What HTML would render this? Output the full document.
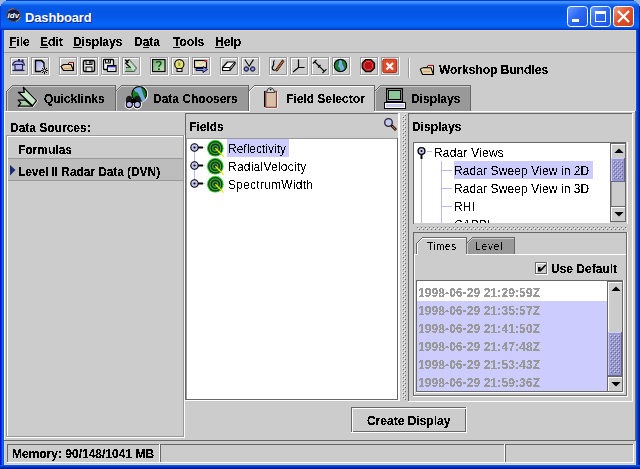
<!DOCTYPE html>
<html><head><meta charset="utf-8">
<style>
html,body{margin:0;padding:0;width:640px;height:469px;overflow:hidden;background:#0a2fd6;}
.t{position:absolute;white-space:nowrap;font-family:"Liberation Sans",sans-serif;font-size:12px;line-height:14px;color:#000;}
svg{position:absolute;left:0;top:0;}
u{text-decoration:underline;text-underline-offset:1px;}
</style></head><body>
<svg width="640" height="469" viewBox="0 0 640 469" shape-rendering="auto">
<rect x="0" y="0" width="640" height="469" fill="#0a2fd6" />
<rect x="0" y="0" width="1" height="469" fill="#0010d0" />
<rect x="1" y="0" width="1" height="469" fill="#0038e0" />
<rect x="2" y="0" width="1" height="469" fill="#1068f4" />
<rect x="3" y="0" width="1" height="469" fill="#0a58e8" />
<rect x="639" y="0" width="1" height="469" fill="#001890" />
<rect x="638" y="0" width="1" height="469" fill="#0028b8" />
<rect x="637" y="0" width="1" height="469" fill="#0040d8" />
<rect x="636" y="0" width="1" height="469" fill="#0a54f0" />
<rect x="0" y="468" width="640" height="1" fill="#001890" />
<rect x="0" y="467" width="640" height="1" fill="#0028b8" />
<rect x="0" y="466" width="640" height="1" fill="#0040d8" />
<rect x="0" y="465" width="640" height="1" fill="#0a54f0" />
<rect x="4" y="30" width="632" height="435" fill="#cccccc" />
<rect x="4" y="30" width="1" height="435" fill="#dcd6c8" />
<rect x="4" y="30" width="632" height="1" fill="#dcd6c8" />
<rect x="635" y="30" width="1" height="435" fill="#d8d4c8" />
<rect x="4" y="464" width="632" height="1" fill="#dcd6c8" />
<rect x="4" y="0" width="632" height="1" fill="#0a3bd2" />
<rect x="4" y="1" width="632" height="1" fill="#3e96ff" />
<rect x="4" y="2" width="632" height="1" fill="#3a90ff" />
<rect x="4" y="3" width="632" height="1" fill="#2f80fb" />
<rect x="4" y="4" width="632" height="1" fill="#1b6cf2" />
<rect x="4" y="5" width="632" height="1" fill="#0c5fea" />
<rect x="4" y="6" width="632" height="1" fill="#085ae8" />
<rect x="4" y="7" width="632" height="1" fill="#0658e7" />
<rect x="4" y="8" width="632" height="1" fill="#0557e6" />
<rect x="4" y="9" width="632" height="1" fill="#0556e5" />
<rect x="4" y="10" width="632" height="1" fill="#0555e5" />
<rect x="4" y="11" width="632" height="1" fill="#0555e4" />
<rect x="4" y="12" width="632" height="1" fill="#0555e4" />
<rect x="4" y="13" width="632" height="1" fill="#0555e4" />
<rect x="4" y="14" width="632" height="1" fill="#0556e5" />
<rect x="4" y="15" width="632" height="1" fill="#0557e6" />
<rect x="4" y="16" width="632" height="1" fill="#0558e8" />
<rect x="4" y="17" width="632" height="1" fill="#0559ea" />
<rect x="4" y="18" width="632" height="1" fill="#055bed" />
<rect x="4" y="19" width="632" height="1" fill="#055df0" />
<rect x="4" y="20" width="632" height="1" fill="#055ff3" />
<rect x="4" y="21" width="632" height="1" fill="#0561f5" />
<rect x="4" y="22" width="632" height="1" fill="#0562f7" />
<rect x="4" y="23" width="632" height="1" fill="#0563f8" />
<rect x="4" y="24" width="632" height="1" fill="#0563f8" />
<rect x="4" y="25" width="632" height="1" fill="#0562f6" />
<rect x="4" y="26" width="632" height="1" fill="#055ef0" />
<rect x="4" y="27" width="632" height="1" fill="#0558e6" />
<rect x="4" y="28" width="632" height="1" fill="#0048d6" />
<rect x="4" y="29" width="632" height="1" fill="#0036bd" />
<rect x="0" y="0" width="4" height="1" fill="#0a3bd2" />
<rect x="636" y="0" width="4" height="1" fill="#0a3bd2" />
<rect x="0" y="1" width="4" height="1" fill="#3e96ff" />
<rect x="636" y="1" width="4" height="1" fill="#3e96ff" />
<rect x="0" y="2" width="4" height="1" fill="#3a90ff" />
<rect x="636" y="2" width="4" height="1" fill="#3a90ff" />
<rect x="0" y="3" width="4" height="1" fill="#2f80fb" />
<rect x="636" y="3" width="4" height="1" fill="#2f80fb" />
<rect x="0" y="4" width="4" height="1" fill="#1b6cf2" />
<rect x="636" y="4" width="4" height="1" fill="#1b6cf2" />
<rect x="0" y="5" width="4" height="1" fill="#0c5fea" />
<rect x="636" y="5" width="4" height="1" fill="#0c5fea" />
<rect x="0" y="6" width="4" height="1" fill="#085ae8" />
<rect x="636" y="6" width="4" height="1" fill="#085ae8" />
<rect x="0" y="7" width="4" height="1" fill="#0658e7" />
<rect x="636" y="7" width="4" height="1" fill="#0658e7" />
<rect x="0" y="8" width="4" height="1" fill="#0557e6" />
<rect x="636" y="8" width="4" height="1" fill="#0557e6" />
<rect x="0" y="9" width="4" height="1" fill="#0556e5" />
<rect x="636" y="9" width="4" height="1" fill="#0556e5" />
<rect x="0" y="10" width="4" height="1" fill="#0555e5" />
<rect x="636" y="10" width="4" height="1" fill="#0555e5" />
<rect x="0" y="11" width="4" height="1" fill="#0555e4" />
<rect x="636" y="11" width="4" height="1" fill="#0555e4" />
<rect x="0" y="12" width="4" height="1" fill="#0555e4" />
<rect x="636" y="12" width="4" height="1" fill="#0555e4" />
<rect x="0" y="13" width="4" height="1" fill="#0555e4" />
<rect x="636" y="13" width="4" height="1" fill="#0555e4" />
<rect x="0" y="14" width="4" height="1" fill="#0556e5" />
<rect x="636" y="14" width="4" height="1" fill="#0556e5" />
<rect x="0" y="15" width="4" height="1" fill="#0557e6" />
<rect x="636" y="15" width="4" height="1" fill="#0557e6" />
<rect x="0" y="16" width="4" height="1" fill="#0558e8" />
<rect x="636" y="16" width="4" height="1" fill="#0558e8" />
<rect x="0" y="17" width="4" height="1" fill="#0559ea" />
<rect x="636" y="17" width="4" height="1" fill="#0559ea" />
<rect x="0" y="18" width="4" height="1" fill="#055bed" />
<rect x="636" y="18" width="4" height="1" fill="#055bed" />
<rect x="0" y="19" width="4" height="1" fill="#055df0" />
<rect x="636" y="19" width="4" height="1" fill="#055df0" />
<rect x="0" y="20" width="4" height="1" fill="#055ff3" />
<rect x="636" y="20" width="4" height="1" fill="#055ff3" />
<rect x="0" y="21" width="4" height="1" fill="#0561f5" />
<rect x="636" y="21" width="4" height="1" fill="#0561f5" />
<rect x="0" y="22" width="4" height="1" fill="#0562f7" />
<rect x="636" y="22" width="4" height="1" fill="#0562f7" />
<rect x="0" y="23" width="4" height="1" fill="#0563f8" />
<rect x="636" y="23" width="4" height="1" fill="#0563f8" />
<rect x="0" y="24" width="4" height="1" fill="#0563f8" />
<rect x="636" y="24" width="4" height="1" fill="#0563f8" />
<rect x="0" y="25" width="4" height="1" fill="#0562f6" />
<rect x="636" y="25" width="4" height="1" fill="#0562f6" />
<rect x="0" y="26" width="4" height="1" fill="#055ef0" />
<rect x="636" y="26" width="4" height="1" fill="#055ef0" />
<rect x="0" y="27" width="4" height="1" fill="#0558e6" />
<rect x="636" y="27" width="4" height="1" fill="#0558e6" />
<rect x="0" y="28" width="4" height="1" fill="#0048d6" />
<rect x="636" y="28" width="4" height="1" fill="#0048d6" />
<rect x="0" y="29" width="4" height="1" fill="#0036bd" />
<rect x="636" y="29" width="4" height="1" fill="#0036bd" />
<rect x="0" y="0" width="6" height="1" fill="#9fb3dc" />
<rect x="634" y="0" width="6" height="1" fill="#9fb3dc" />
<rect x="0" y="1" width="4" height="1" fill="#9fb3dc" />
<rect x="636" y="1" width="4" height="1" fill="#9fb3dc" />
<rect x="0" y="2" width="3" height="1" fill="#9fb3dc" />
<rect x="637" y="2" width="3" height="1" fill="#9fb3dc" />
<rect x="0" y="3" width="2" height="1" fill="#9fb3dc" />
<rect x="638" y="3" width="2" height="1" fill="#9fb3dc" />
<rect x="0" y="4" width="1" height="1" fill="#9fb3dc" />
<rect x="639" y="4" width="1" height="1" fill="#9fb3dc" />
<rect x="0" y="5" width="1" height="1" fill="#9fb3dc" />
<rect x="639" y="5" width="1" height="1" fill="#9fb3dc" />
<rect x="0" y="6" width="1" height="24" fill="#0a3bd2" />
<rect x="639" y="6" width="1" height="24" fill="#0024b0" />
<g><ellipse cx="13.5" cy="15.3" rx="7.4" ry="6.7" fill="#50504a"/><path d="M8 11 Q11 8.6 14 8.8" stroke="#c06040" stroke-width="1" fill="none"/><path d="M16 21.5 Q19 20.5 20.5 17" stroke="#b0a060" stroke-width="1" fill="none"/><ellipse cx="13.5" cy="15.3" rx="6.3" ry="5.7" fill="#101a48"/><text x="13.4" y="18.3" font-family="Liberation Sans" font-size="8" font-weight="bold" fill="#fff" text-anchor="middle" font-style="italic">idv</text></g>
<defs><linearGradient id="gmin" x1="0" y1="0" x2="1" y2="1"><stop offset="0" stop-color="#6ea0ff"/><stop offset="0.45" stop-color="#2d6af5"/><stop offset="1" stop-color="#1a4fe0"/></linearGradient></defs>
<rect x="567.5" y="6.5" width="20" height="20" rx="3" ry="3" fill="url(#gmin)" stroke="#fff" stroke-width="1"/>
<rect x="572" y="19" width="7" height="3" fill="#fff" />
<defs><linearGradient id="gmax" x1="0" y1="0" x2="1" y2="1"><stop offset="0" stop-color="#6ea0ff"/><stop offset="0.45" stop-color="#2d6af5"/><stop offset="1" stop-color="#1a4fe0"/></linearGradient></defs>
<rect x="590.5" y="6.5" width="20" height="20" rx="3" ry="3" fill="url(#gmax)" stroke="#fff" stroke-width="1"/>
<rect x="595" y="11" width="11" height="3" fill="#fff" />
<rect x="595" y="11" width="1" height="11" fill="#fff" />
<rect x="605" y="11" width="1" height="11" fill="#fff" />
<rect x="595" y="21" width="11" height="1" fill="#fff" />
<defs><linearGradient id="gclose" x1="0" y1="0" x2="1" y2="1"><stop offset="0" stop-color="#f2a68a"/><stop offset="0.45" stop-color="#e2532c"/><stop offset="1" stop-color="#c83c18"/></linearGradient></defs>
<rect x="613.5" y="6.5" width="20" height="20" rx="3" ry="3" fill="url(#gclose)" stroke="#fff" stroke-width="1"/>
<path d="M618.8 11.8 L628.2 21.2 M628.2 11.8 L618.8 21.2" stroke="#fff" stroke-width="2.3" stroke-linecap="square"/>
<rect x="4" y="52" width="632" height="1" fill="#999999" />
<defs><linearGradient id="lav" x1="0" y1="0" x2="1" y2="1"><stop offset="0" stop-color="#9c9cdc"/><stop offset="1" stop-color="#ececff"/></linearGradient><linearGradient id="grn" x1="0" y1="0" x2="1" y2="1"><stop offset="0" stop-color="#6aa66a"/><stop offset="1" stop-color="#c8e8c8"/></linearGradient><radialGradient id="glb" cx="0.4" cy="0.4" r="0.7"><stop offset="0" stop-color="#a0c8ff"/><stop offset="1" stop-color="#2060c0"/></radialGradient></defs>
<rect x="10" y="57" width="18" height="1" fill="#999999" />
<rect x="10" y="74" width="18" height="1" fill="#999999" />
<rect x="10" y="57" width="1" height="18" fill="#999999" />
<rect x="27" y="57" width="1" height="18" fill="#999999" />
<rect x="11" y="58" width="1" height="16" fill="#ffffff" />
<rect x="11" y="58" width="16" height="1" fill="#ffffff" />
<rect x="10" y="75" width="19" height="1" fill="#ffffff" />
<rect x="28" y="57" width="1" height="19" fill="#ffffff" />
<g transform="translate(11,58)"><path d="M1.5 7 C2 4.2 4.5 3 7.5 3 C10.5 3 13 4.2 13.5 7 Z" fill="#b0b0e4" stroke="#1c1c58" stroke-width="1.1"/><rect x="7" y="1" width="2" height="2.5" fill="#1c1c58"/><rect x="10.5" y="1.5" width="2" height="2.5" fill="#1c1c58"/><rect x="4" y="6.5" width="7.5" height="5.5" fill="#b8b8e8" stroke="#1c1c58" stroke-width="1.1"/><path d="M1.5 12.5 H13.5" stroke="#1c1c58" stroke-width="1.2"/></g>
<rect x="31" y="57" width="18" height="1" fill="#999999" />
<rect x="31" y="74" width="18" height="1" fill="#999999" />
<rect x="31" y="57" width="1" height="18" fill="#999999" />
<rect x="48" y="57" width="1" height="18" fill="#999999" />
<rect x="32" y="58" width="1" height="16" fill="#ffffff" />
<rect x="32" y="58" width="16" height="1" fill="#ffffff" />
<rect x="31" y="75" width="19" height="1" fill="#ffffff" />
<rect x="49" y="57" width="1" height="19" fill="#ffffff" />
<g transform="translate(32,58)"><path d="M3.5 2.5 H9.5 L12 5 V13.5 H3.5 Z" fill="url(#lav)" stroke="#000" stroke-width="1.3"/><path d="M9.5 2.5 L12 5" stroke="#000" stroke-width="1.3"/><circle cx="12.5" cy="12.5" r="3.6" fill="#cccccc"/><path d="M12.5 9 V16 M9 12.5 H16 M10 10 L15 15 M15 10 L10 15" stroke="#000" stroke-width="1"/><circle cx="12.5" cy="12.5" r="1.1" fill="#fff"/></g>
<rect x="59" y="57" width="18" height="1" fill="#999999" />
<rect x="59" y="74" width="18" height="1" fill="#999999" />
<rect x="59" y="57" width="1" height="18" fill="#999999" />
<rect x="76" y="57" width="1" height="18" fill="#999999" />
<rect x="60" y="58" width="1" height="16" fill="#ffffff" />
<rect x="60" y="58" width="16" height="1" fill="#ffffff" />
<rect x="59" y="75" width="19" height="1" fill="#ffffff" />
<rect x="77" y="57" width="1" height="19" fill="#ffffff" />
<g transform="translate(60,58)"><path d="M3.5 6.5 H8 L9 4.5 H13.5 V12.5 H3.5 Z" fill="#f2e2c4" stroke="#000" stroke-width="1"/><path d="M9 4.5 H13.5" stroke="#a01818" stroke-width="1.2"/><path d="M1 8.5 C2 7 3 6.5 5 6.5 H11 L13.5 12.5 H3.5 Z" fill="#ead2a8" stroke="#000" stroke-width="1.2"/><path d="M4 10.5 H11" stroke="#c8a880" stroke-width="1.5"/></g>
<rect x="80" y="57" width="18" height="1" fill="#999999" />
<rect x="80" y="74" width="18" height="1" fill="#999999" />
<rect x="80" y="57" width="1" height="18" fill="#999999" />
<rect x="97" y="57" width="1" height="18" fill="#999999" />
<rect x="81" y="58" width="1" height="16" fill="#ffffff" />
<rect x="81" y="58" width="16" height="1" fill="#ffffff" />
<rect x="80" y="75" width="19" height="1" fill="#ffffff" />
<rect x="98" y="57" width="1" height="19" fill="#ffffff" />
<g transform="translate(81,58)"><rect x="2.5" y="2.5" width="11" height="11" rx="1.5" fill="#f4f4f4" stroke="#000" stroke-width="1.4"/><rect x="5" y="2.5" width="6" height="4" fill="#d0d0d0" stroke="#000" stroke-width="1"/><rect x="8.2" y="3" width="1.5" height="2.5" fill="#000"/><rect x="5" y="9" width="6" height="4.5" fill="#e8e8e8" stroke="#000" stroke-width="1"/></g>
<rect x="101" y="57" width="18" height="1" fill="#999999" />
<rect x="101" y="74" width="18" height="1" fill="#999999" />
<rect x="101" y="57" width="1" height="18" fill="#999999" />
<rect x="118" y="57" width="1" height="18" fill="#999999" />
<rect x="102" y="58" width="1" height="16" fill="#ffffff" />
<rect x="102" y="58" width="16" height="1" fill="#ffffff" />
<rect x="101" y="75" width="19" height="1" fill="#ffffff" />
<rect x="119" y="57" width="1" height="19" fill="#ffffff" />
<g transform="translate(102,58)"><rect x="1.5" y="1.5" width="10" height="10" rx="1" fill="#f4f4f4" stroke="#000" stroke-width="1.3"/><rect x="3.5" y="1.5" width="5" height="3.5" fill="#d0d0d0" stroke="#000" stroke-width="1"/><rect x="6" y="2" width="1.2" height="2.2" fill="#000"/><rect x="5.5" y="7.5" width="8.5" height="6" fill="#fff" stroke="#000" stroke-width="1.1"/><rect x="6" y="8" width="7.5" height="1.4" fill="#2a2aa0"/><rect x="7.5" y="10.5" width="5" height="2" fill="#c8c8e8"/></g>
<rect x="122" y="57" width="18" height="1" fill="#999999" />
<rect x="122" y="74" width="18" height="1" fill="#999999" />
<rect x="122" y="57" width="1" height="18" fill="#999999" />
<rect x="139" y="57" width="1" height="18" fill="#999999" />
<rect x="123" y="58" width="1" height="16" fill="#ffffff" />
<rect x="123" y="58" width="16" height="1" fill="#ffffff" />
<rect x="122" y="75" width="19" height="1" fill="#ffffff" />
<rect x="140" y="57" width="1" height="19" fill="#ffffff" />
<g transform="translate(123,58)"><path d="M2.5 2 L5 3 L6 1.5 L13.5 10 L11 13.5 L3 13.5 L5.5 11.5 L3.5 9.5 L7.5 9.5 L2.5 5 L5 4.5 Z" fill="#c4e2c4" stroke="#000" stroke-width="1.1" stroke-linejoin="round"/><path d="M3.5 9.5 L7.5 9.5 L11 13.5 L3 13.5 Z" fill="#90c090"/><path d="M6 1.5 L13.5 10 L11 13.5" stroke="#fff" stroke-width="0.7" fill="none" opacity="0.8"/></g>
<rect x="150" y="57" width="18" height="1" fill="#999999" />
<rect x="150" y="74" width="18" height="1" fill="#999999" />
<rect x="150" y="57" width="1" height="18" fill="#999999" />
<rect x="167" y="57" width="1" height="18" fill="#999999" />
<rect x="151" y="58" width="1" height="16" fill="#ffffff" />
<rect x="151" y="58" width="16" height="1" fill="#ffffff" />
<rect x="150" y="75" width="19" height="1" fill="#ffffff" />
<rect x="168" y="57" width="1" height="19" fill="#ffffff" />
<g transform="translate(151,58)"><rect x="1.5" y="1.5" width="12.5" height="12" fill="url(#grn)" stroke="#000" stroke-width="1.2"/><path d="M5.5 5 C5.5 3 10 3 10 5.2 C10 7 7.8 7 7.8 9" stroke="#105010" stroke-width="1.5" fill="none"/><rect x="7" y="10.3" width="1.8" height="1.8" fill="#105010"/></g>
<rect x="171" y="57" width="18" height="1" fill="#999999" />
<rect x="171" y="74" width="18" height="1" fill="#999999" />
<rect x="171" y="57" width="1" height="18" fill="#999999" />
<rect x="188" y="57" width="1" height="18" fill="#999999" />
<rect x="172" y="58" width="1" height="16" fill="#ffffff" />
<rect x="172" y="58" width="16" height="1" fill="#ffffff" />
<rect x="171" y="75" width="19" height="1" fill="#ffffff" />
<rect x="189" y="57" width="1" height="19" fill="#ffffff" />
<g transform="translate(172,58)"><circle cx="7.3" cy="6.2" r="4.6" fill="#e4e45a" stroke="#000" stroke-width="1.1"/><rect x="6.4" y="3" width="1.8" height="5" fill="#888" /><rect x="6.8" y="2.5" width="1" height="2" fill="#fff"/><rect x="5" y="10.5" width="5" height="3" fill="#f0d8c8" stroke="#000" stroke-width="1"/></g>
<rect x="192" y="57" width="18" height="1" fill="#999999" />
<rect x="192" y="74" width="18" height="1" fill="#999999" />
<rect x="192" y="57" width="1" height="18" fill="#999999" />
<rect x="209" y="57" width="1" height="18" fill="#999999" />
<rect x="193" y="58" width="1" height="16" fill="#ffffff" />
<rect x="193" y="58" width="16" height="1" fill="#ffffff" />
<rect x="192" y="75" width="19" height="1" fill="#ffffff" />
<rect x="210" y="57" width="1" height="19" fill="#ffffff" />
<g transform="translate(193,58)"><rect x="1.5" y="2.5" width="12" height="7" fill="#f0e8c0" stroke="#000" stroke-width="1.2"/><path d="M2 3 L7.5 6.5 L13 3" stroke="#c8c090" stroke-width="0.8" fill="none"/><rect x="11.5" y="2" width="2.5" height="2" fill="#e02020"/><path d="M3 10.5 H10 V8.5 L14.5 11.5 L10 14.5 V12.5 H3 Z" fill="#7890f0" stroke="#101040" stroke-width="1"/></g>
<rect x="220" y="57" width="18" height="1" fill="#999999" />
<rect x="220" y="74" width="18" height="1" fill="#999999" />
<rect x="220" y="57" width="1" height="18" fill="#999999" />
<rect x="237" y="57" width="1" height="18" fill="#999999" />
<rect x="221" y="58" width="1" height="16" fill="#ffffff" />
<rect x="221" y="58" width="16" height="1" fill="#ffffff" />
<rect x="220" y="75" width="19" height="1" fill="#ffffff" />
<rect x="238" y="57" width="1" height="19" fill="#ffffff" />
<g transform="translate(221,58)"><path d="M1.5 9.5 L6.5 4 H14 V6 L9 12.5 H1.5 Z" fill="#fff" stroke="#000" stroke-width="1.2" stroke-linejoin="round"/><path d="M1.5 9.5 H9 L14 4 M9 9.5 V12.5" stroke="#000" stroke-width="1.1" fill="none"/></g>
<rect x="241" y="57" width="18" height="1" fill="#999999" />
<rect x="241" y="74" width="18" height="1" fill="#999999" />
<rect x="241" y="57" width="1" height="18" fill="#999999" />
<rect x="258" y="57" width="1" height="18" fill="#999999" />
<rect x="242" y="58" width="1" height="16" fill="#ffffff" />
<rect x="242" y="58" width="16" height="1" fill="#ffffff" />
<rect x="241" y="75" width="19" height="1" fill="#ffffff" />
<rect x="259" y="57" width="1" height="19" fill="#ffffff" />
<g transform="translate(242,58)"><path d="M3 1.5 L7.5 8.5 M11.5 1.5 L7 8.5" stroke="#000" stroke-width="1.3"/><path d="M4 1.5 L7.5 7" stroke="#fff" stroke-width="0.6"/><circle cx="4.3" cy="11" r="2.3" fill="#3a48c0" stroke="#000" stroke-width="0.8"/><circle cx="10.7" cy="11" r="2.3" fill="#3a48c0" stroke="#000" stroke-width="0.8"/><path d="M3 9.7 L5.6 12.3 M5.6 9.7 L3 12.3 M9.4 9.7 L12 12.3 M12 9.7 L9.4 12.3" stroke="#c8c8ff" stroke-width="0.8"/></g>
<rect x="269" y="57" width="18" height="1" fill="#999999" />
<rect x="269" y="74" width="18" height="1" fill="#999999" />
<rect x="269" y="57" width="1" height="18" fill="#999999" />
<rect x="286" y="57" width="1" height="18" fill="#999999" />
<rect x="270" y="58" width="1" height="16" fill="#ffffff" />
<rect x="270" y="58" width="16" height="1" fill="#ffffff" />
<rect x="269" y="75" width="19" height="1" fill="#ffffff" />
<rect x="287" y="57" width="1" height="19" fill="#ffffff" />
<g transform="translate(270,58)"><path d="M4.5 2.5 C2 4 5 6 3 8 C1 10 3 13 5.5 12" stroke="#000" stroke-width="1.2" fill="none"/><path d="M5.5 12 L12.5 2 L14 3.3 L7 13.2 Z" fill="#f0c830" stroke="#000" stroke-width="0.9"/><path d="M6.5 12 L13 3" stroke="#d02020" stroke-width="1"/></g>
<rect x="290" y="57" width="18" height="1" fill="#999999" />
<rect x="290" y="74" width="18" height="1" fill="#999999" />
<rect x="290" y="57" width="1" height="18" fill="#999999" />
<rect x="307" y="57" width="1" height="18" fill="#999999" />
<rect x="291" y="58" width="1" height="16" fill="#ffffff" />
<rect x="291" y="58" width="16" height="1" fill="#ffffff" />
<rect x="290" y="75" width="19" height="1" fill="#ffffff" />
<rect x="308" y="57" width="1" height="19" fill="#ffffff" />
<g transform="translate(291,58)"><path d="M7.5 1.5 V9.5 H13.5 M7.5 9.5 L2 14" stroke="#000" stroke-width="1.2" fill="none"/></g>
<rect x="311" y="57" width="18" height="1" fill="#999999" />
<rect x="311" y="74" width="18" height="1" fill="#999999" />
<rect x="311" y="57" width="1" height="18" fill="#999999" />
<rect x="328" y="57" width="1" height="18" fill="#999999" />
<rect x="312" y="58" width="1" height="16" fill="#ffffff" />
<rect x="312" y="58" width="16" height="1" fill="#ffffff" />
<rect x="311" y="75" width="19" height="1" fill="#ffffff" />
<rect x="329" y="57" width="1" height="19" fill="#ffffff" />
<g transform="translate(312,58)"><path d="M2.5 3.5 L12.5 13.5 M0.8 5.5 L4.5 1.8 M10.5 15 L14.5 11.2 M6 9.5 L8.5 7" stroke="#000" stroke-width="1.1" fill="none"/></g>
<rect x="332" y="57" width="18" height="1" fill="#999999" />
<rect x="332" y="74" width="18" height="1" fill="#999999" />
<rect x="332" y="57" width="1" height="18" fill="#999999" />
<rect x="349" y="57" width="1" height="18" fill="#999999" />
<rect x="333" y="58" width="1" height="16" fill="#ffffff" />
<rect x="333" y="58" width="16" height="1" fill="#ffffff" />
<rect x="332" y="75" width="19" height="1" fill="#ffffff" />
<rect x="350" y="57" width="1" height="19" fill="#ffffff" />
<g transform="translate(333,58)"><circle cx="8" cy="8" r="6.4" fill="#fff"/><circle cx="7.5" cy="7.5" r="6.2" fill="#148030"/><path d="M6 1.8 C8.5 1.8 9.5 3 9 4.5 C9 6.5 10.5 8 11.5 10.5 C10.5 12 9 13 7.5 13.2 C7.5 11 6.5 9 5 8.5 C6 6.5 6.5 4 6 1.8 Z" fill="#80a8e8"/><circle cx="7.5" cy="7.5" r="6.2" fill="none" stroke="#000" stroke-width="1.2"/></g>
<rect x="360" y="57" width="18" height="1" fill="#999999" />
<rect x="360" y="74" width="18" height="1" fill="#999999" />
<rect x="360" y="57" width="1" height="18" fill="#999999" />
<rect x="377" y="57" width="1" height="18" fill="#999999" />
<rect x="361" y="58" width="1" height="16" fill="#ffffff" />
<rect x="361" y="58" width="16" height="1" fill="#ffffff" />
<rect x="360" y="75" width="19" height="1" fill="#ffffff" />
<rect x="378" y="57" width="1" height="19" fill="#ffffff" />
<g transform="translate(361,58)"><path d="M4.8 1.5 H9.8 L13.5 5.2 V10 L9.8 13.6 H4.8 L1.2 10 V5.2 Z" fill="#b81010" stroke="#000" stroke-width="1.2"/><path d="M5.5 3.5 H9.2 L11.5 5.8 V9.4 L9.2 11.7 H5.5 L3.2 9.4 V5.8 Z" fill="none" stroke="#e07070" stroke-width="0.8"/></g>
<rect x="381" y="57" width="18" height="1" fill="#999999" />
<rect x="381" y="74" width="18" height="1" fill="#999999" />
<rect x="381" y="57" width="1" height="18" fill="#999999" />
<rect x="398" y="57" width="1" height="18" fill="#999999" />
<rect x="382" y="58" width="1" height="16" fill="#ffffff" />
<rect x="382" y="58" width="16" height="1" fill="#ffffff" />
<rect x="381" y="75" width="19" height="1" fill="#ffffff" />
<rect x="399" y="57" width="1" height="19" fill="#ffffff" />
<g transform="translate(382,58)"><rect x="0.8" y="1.2" width="13.8" height="13.4" rx="1.5" fill="#e24a2c" stroke="#b02810" stroke-width="1"/><path d="M4.5 5 L11 11.5 M11 5 L4.5 11.5" stroke="#fff" stroke-width="2.3"/></g>
<rect x="408" y="58" width="1" height="20" fill="#999999" />
<rect x="409" y="58" width="1" height="20" fill="#ffffff" />
<path d="M423.5 67.5 H427 L428 65.5 H433.5 V74.5 H422.5 Z" fill="#f2e2c4" stroke="#000" stroke-width="1"/><path d="M428 65.5 H433.5" stroke="#a01818" stroke-width="1.2"/><path d="M420.3 69.2 C421 68 422 67.8 424 67.8 H431 L433.5 74.5 H422.5 Z" fill="#ead2a8" stroke="#000" stroke-width="1.1"/><path d="M423.5 71.5 H430" stroke="#c8a880" stroke-width="1.4"/>
<polygon points="7,92 13,86 115,86 115,111 7,111" fill="#999999"/>
<rect x="6" y="91" width="1" height="1" fill="#666666" />
<rect x="7" y="90" width="1" height="1" fill="#666666" />
<rect x="8" y="89" width="1" height="1" fill="#666666" />
<rect x="9" y="88" width="1" height="1" fill="#666666" />
<rect x="10" y="87" width="1" height="1" fill="#666666" />
<rect x="11" y="86" width="1" height="1" fill="#666666" />
<rect x="12" y="85" width="1" height="1" fill="#666666" />
<rect x="12" y="85" width="104" height="1" fill="#666666" />
<rect x="115" y="86" width="1" height="25" fill="#666666" />
<rect x="6" y="91" width="1" height="20" fill="#666666" />
<rect x="7" y="91" width="1" height="1" fill="#cccccc" />
<rect x="8" y="90" width="1" height="1" fill="#cccccc" />
<rect x="9" y="89" width="1" height="1" fill="#cccccc" />
<rect x="10" y="88" width="1" height="1" fill="#cccccc" />
<rect x="11" y="87" width="1" height="1" fill="#cccccc" />
<rect x="12" y="86" width="1" height="1" fill="#cccccc" />
<rect x="13" y="86" width="102" height="1" fill="#cccccc" />
<rect x="7" y="91" width="1" height="20" fill="#cccccc" />
<polygon points="116,92 122,86 248,86 248,111 116,111" fill="#999999"/>
<rect x="115" y="91" width="1" height="1" fill="#666666" />
<rect x="116" y="90" width="1" height="1" fill="#666666" />
<rect x="117" y="89" width="1" height="1" fill="#666666" />
<rect x="118" y="88" width="1" height="1" fill="#666666" />
<rect x="119" y="87" width="1" height="1" fill="#666666" />
<rect x="120" y="86" width="1" height="1" fill="#666666" />
<rect x="121" y="85" width="1" height="1" fill="#666666" />
<rect x="121" y="85" width="128" height="1" fill="#666666" />
<rect x="248" y="86" width="1" height="25" fill="#666666" />
<rect x="116" y="91" width="1" height="1" fill="#cccccc" />
<rect x="117" y="90" width="1" height="1" fill="#cccccc" />
<rect x="118" y="89" width="1" height="1" fill="#cccccc" />
<rect x="119" y="88" width="1" height="1" fill="#cccccc" />
<rect x="120" y="87" width="1" height="1" fill="#cccccc" />
<rect x="121" y="86" width="1" height="1" fill="#cccccc" />
<rect x="122" y="86" width="126" height="1" fill="#cccccc" />
<rect x="116" y="91" width="1" height="20" fill="#cccccc" />
<polygon points="375,92 381,86 470,86 470,111 375,111" fill="#999999"/>
<rect x="374" y="91" width="1" height="1" fill="#666666" />
<rect x="375" y="90" width="1" height="1" fill="#666666" />
<rect x="376" y="89" width="1" height="1" fill="#666666" />
<rect x="377" y="88" width="1" height="1" fill="#666666" />
<rect x="378" y="87" width="1" height="1" fill="#666666" />
<rect x="379" y="86" width="1" height="1" fill="#666666" />
<rect x="380" y="85" width="1" height="1" fill="#666666" />
<rect x="380" y="85" width="91" height="1" fill="#666666" />
<rect x="470" y="86" width="1" height="25" fill="#666666" />
<rect x="375" y="91" width="1" height="1" fill="#cccccc" />
<rect x="376" y="90" width="1" height="1" fill="#cccccc" />
<rect x="377" y="89" width="1" height="1" fill="#cccccc" />
<rect x="378" y="88" width="1" height="1" fill="#cccccc" />
<rect x="379" y="87" width="1" height="1" fill="#cccccc" />
<rect x="380" y="86" width="1" height="1" fill="#cccccc" />
<rect x="381" y="86" width="89" height="1" fill="#cccccc" />
<rect x="375" y="91" width="1" height="20" fill="#cccccc" />
<polygon points="249,92 255,86 374,86 374,112 249,112" fill="#cccccc"/>
<rect x="248" y="91" width="1" height="1" fill="#666666" />
<rect x="249" y="90" width="1" height="1" fill="#666666" />
<rect x="250" y="89" width="1" height="1" fill="#666666" />
<rect x="251" y="88" width="1" height="1" fill="#666666" />
<rect x="252" y="87" width="1" height="1" fill="#666666" />
<rect x="253" y="86" width="1" height="1" fill="#666666" />
<rect x="254" y="85" width="1" height="1" fill="#666666" />
<rect x="254" y="85" width="121" height="1" fill="#666666" />
<rect x="374" y="86" width="1" height="25" fill="#666666" />
<rect x="249" y="91" width="1" height="1" fill="#ffffff" />
<rect x="250" y="90" width="1" height="1" fill="#ffffff" />
<rect x="251" y="89" width="1" height="1" fill="#ffffff" />
<rect x="252" y="88" width="1" height="1" fill="#ffffff" />
<rect x="253" y="87" width="1" height="1" fill="#ffffff" />
<rect x="254" y="86" width="1" height="1" fill="#ffffff" />
<rect x="255" y="86" width="119" height="1" fill="#ffffff" />
<rect x="249" y="91" width="1" height="21" fill="#ffffff" />
<rect x="4" y="111" width="245" height="1" fill="#ffffff" />
<rect x="374" y="111" width="262" height="1" fill="#ffffff" />
<rect x="4" y="111" width="1" height="330" fill="#ffffff" />
<rect x="4" y="440" width="632" height="1" fill="#666666" />
<rect x="635" y="111" width="1" height="330" fill="#666666" />
<path d="M24.2 87.6 L37.4 100.8 L33.2 106.6 L19 107 L32 107" fill="none" stroke="#fff" stroke-width="1.2"/>
<path d="M18.2 100.1 L25.1 100.1 L32.5 106.2 L18.2 106.2 L20.9 103.1 Z" fill="#a8d4a8" stroke="#000" stroke-width="1.3" stroke-linejoin="round"/>
<path d="M23.4 87.3 L36.6 100.6 L32.5 105.8 L18.4 92.3 L24.3 92.3 Z" fill="#c8e6c8" stroke="#000" stroke-width="1.3" stroke-linejoin="round"/>
<circle cx="139.6" cy="94.2" r="8.6" fill="#fff"/><circle cx="139.2" cy="94" r="7.4" fill="#128020" stroke="#000" stroke-width="1.2"/><path d="M134 89.8 C136 87.6 139 87 141.2 87.4 C142 91 143.2 95.5 145.6 99.2 C144.6 100.8 143.2 101.4 142 101.6 C140.8 98 139 94 137.5 92.5 C136 92.2 134.8 91.5 134 89.8 Z" fill="#78a8e8"/><circle cx="129.3" cy="104.8" r="4.6" fill="#fff"/><circle cx="137.3" cy="104.8" r="4.6" fill="#fff"/><path d="M126 104 V99 Q126.5 96 129.3 95.8 Q132 96 132.6 99 V104 Z" fill="#1a1a1a"/><path d="M134 104 V99 Q134.5 96 137.3 95.8 Q140 96 140.6 99 V104 Z" fill="#1a1a1a"/><rect x="131" y="99" width="5" height="4" fill="#000"/><circle cx="129.3" cy="104.6" r="3.6" fill="#000"/><circle cx="137.3" cy="104.6" r="3.6" fill="#000"/><circle cx="129.3" cy="104.6" r="2.5" fill="#b8b8f0"/><circle cx="137.3" cy="104.6" r="2.5" fill="#b8b8f0"/>
<rect x="264" y="91" width="1.3" height="16" fill="#000"/><rect x="276.5" y="92" width="1.2" height="16" fill="#fff"/><rect x="265" y="107.5" width="12" height="1" fill="#fff"/><rect x="265.8" y="91.3" width="10.6" height="16" fill="#d8c0a8" stroke="#7a2828" stroke-width="1"/><path d="M266.5 92.5 L268 88.8 Q270.5 86.6 273 88.8 L274.8 92.5 Z" fill="#d8d8d8" stroke="#303030" stroke-width="0.9"/><circle cx="270.6" cy="89.6" r="0.9" fill="#000"/>
<g transform="translate(384,87)"><rect x="2" y="1" width="17" height="14" fill="#000"/><rect x="3.5" y="2.5" width="14" height="11" fill="#fff"/><rect x="4.5" y="3.5" width="12" height="9" fill="#8ec89a" stroke="#000" stroke-width="1"/><rect x="3.5" y="13" width="14" height="1" fill="#b8a0e0"/><rect x="0.5" y="15.5" width="21" height="6" fill="#fff" stroke="#000" stroke-width="1"/><rect x="2" y="17" width="18" height="3" fill="#c8c8ec"/></g>
<rect x="6" y="135" width="178" height="1" fill="#999999" />
<rect x="6" y="436" width="178" height="1" fill="#999999" />
<rect x="6" y="135" width="1" height="302" fill="#999999" />
<rect x="183" y="135" width="1" height="302" fill="#999999" />
<rect x="7" y="136" width="1" height="300" fill="#ffffff" />
<rect x="7" y="136" width="176" height="1" fill="#ffffff" />
<rect x="6" y="437" width="179" height="1" fill="#ffffff" />
<rect x="184" y="135" width="1" height="303" fill="#ffffff" />
<rect x="8" y="158" width="175" height="1" fill="#999999" />
<rect x="8" y="159" width="175" height="21" fill="#bdbdbd" />
<rect x="8" y="180" width="175" height="1" fill="#999999" />
<polygon points="10,165 15.5,170 10,175.5" fill="#1c2a78"/>
<rect x="185" y="113" width="1" height="288" fill="#666666" />
<rect x="185" y="113" width="214" height="1" fill="#666666" />
<rect x="398" y="113" width="1" height="288" fill="#ffffff" />
<rect x="399" y="113" width="1" height="288" fill="#ffffff" />
<rect x="185" y="400" width="215" height="1" fill="#ffffff" />
<g transform="translate(384,118)"><circle cx="4.5" cy="4.5" r="3.8" fill="#c8c8e8" stroke="#202040" stroke-width="1.3"/><path d="M7.5 7.5 L12 12" stroke="#000" stroke-width="2.6"/><path d="M8 8 L11.6 11.6" stroke="#c06020" stroke-width="1.2"/></g>
<rect x="187" y="139" width="210" height="260" fill="#ffffff" />
<rect x="186" y="138" width="212" height="1" fill="#999999" />
<rect x="186" y="138" width="1" height="262" fill="#999999" />
<rect x="397" y="138" width="1" height="262" fill="#666666" />
<rect x="186" y="399" width="212" height="1" fill="#666666" />
<rect x="194" y="151" width="1" height="33" fill="#b8b8f0" />
<path d="M198 147.5 H203" stroke="#000" stroke-width="2"/><path d="M203 147.5 H205" stroke="#c8c8f0" stroke-width="1"/>
<circle cx="194.5" cy="147.5" r="3.7" fill="#c4c4f0" stroke="#000" stroke-width="1.1"/><circle cx="194.5" cy="147.5" r="1.1" fill="#000"/>
<circle cx="215.3" cy="148.3" r="8.3" fill="#14d014"/><circle cx="215.3" cy="148.3" r="7.2" fill="#302830"/><circle cx="215.3" cy="148.3" r="5.4" fill="none" stroke="#14d014" stroke-width="1.1"/><circle cx="215.3" cy="148.3" r="2.6" fill="none" stroke="#14d014" stroke-width="1.1"/><path d="M215.3 148.3 L223.8 156.60000000000002" stroke="#f8e800" stroke-width="1.3"/>
<rect x="227" y="139" width="62" height="18" fill="#ccccff" />
<path d="M198 165.5 H203" stroke="#000" stroke-width="2"/><path d="M203 165.5 H205" stroke="#c8c8f0" stroke-width="1"/>
<circle cx="194.5" cy="165.5" r="3.7" fill="#c4c4f0" stroke="#000" stroke-width="1.1"/><circle cx="194.5" cy="165.5" r="1.1" fill="#000"/>
<circle cx="215.3" cy="166.3" r="8.3" fill="#14d014"/><circle cx="215.3" cy="166.3" r="7.2" fill="#302830"/><circle cx="215.3" cy="166.3" r="5.4" fill="none" stroke="#14d014" stroke-width="1.1"/><circle cx="215.3" cy="166.3" r="2.6" fill="none" stroke="#14d014" stroke-width="1.1"/><path d="M215.3 166.3 L223.8 174.60000000000002" stroke="#f8e800" stroke-width="1.3"/>
<path d="M198 183.5 H203" stroke="#000" stroke-width="2"/><path d="M203 183.5 H205" stroke="#c8c8f0" stroke-width="1"/>
<circle cx="194.5" cy="183.5" r="3.7" fill="#c4c4f0" stroke="#000" stroke-width="1.1"/><circle cx="194.5" cy="183.5" r="1.1" fill="#000"/>
<circle cx="215.3" cy="184.3" r="8.3" fill="#14d014"/><circle cx="215.3" cy="184.3" r="7.2" fill="#302830"/><circle cx="215.3" cy="184.3" r="5.4" fill="none" stroke="#14d014" stroke-width="1.1"/><circle cx="215.3" cy="184.3" r="2.6" fill="none" stroke="#14d014" stroke-width="1.1"/><path d="M215.3 184.3 L223.8 192.60000000000002" stroke="#f8e800" stroke-width="1.3"/>
<rect x="404" y="114" width="1" height="1" fill="#ffffff" />
<rect x="405" y="115" width="1" height="1" fill="#666666" />
<rect x="402" y="116" width="1" height="1" fill="#ffffff" />
<rect x="403" y="117" width="1" height="1" fill="#666666" />
<rect x="404" y="118" width="1" height="1" fill="#ffffff" />
<rect x="405" y="119" width="1" height="1" fill="#666666" />
<rect x="402" y="120" width="1" height="1" fill="#ffffff" />
<rect x="403" y="121" width="1" height="1" fill="#666666" />
<rect x="404" y="122" width="1" height="1" fill="#ffffff" />
<rect x="405" y="123" width="1" height="1" fill="#666666" />
<rect x="402" y="124" width="1" height="1" fill="#ffffff" />
<rect x="403" y="125" width="1" height="1" fill="#666666" />
<rect x="404" y="126" width="1" height="1" fill="#ffffff" />
<rect x="405" y="127" width="1" height="1" fill="#666666" />
<rect x="402" y="128" width="1" height="1" fill="#ffffff" />
<rect x="403" y="129" width="1" height="1" fill="#666666" />
<rect x="404" y="130" width="1" height="1" fill="#ffffff" />
<rect x="405" y="131" width="1" height="1" fill="#666666" />
<rect x="402" y="132" width="1" height="1" fill="#ffffff" />
<rect x="403" y="133" width="1" height="1" fill="#666666" />
<rect x="404" y="134" width="1" height="1" fill="#ffffff" />
<rect x="405" y="135" width="1" height="1" fill="#666666" />
<rect x="402" y="136" width="1" height="1" fill="#ffffff" />
<rect x="403" y="137" width="1" height="1" fill="#666666" />
<rect x="404" y="138" width="1" height="1" fill="#ffffff" />
<rect x="405" y="139" width="1" height="1" fill="#666666" />
<rect x="402" y="140" width="1" height="1" fill="#ffffff" />
<rect x="403" y="141" width="1" height="1" fill="#666666" />
<rect x="404" y="142" width="1" height="1" fill="#ffffff" />
<rect x="405" y="143" width="1" height="1" fill="#666666" />
<rect x="402" y="144" width="1" height="1" fill="#ffffff" />
<rect x="403" y="145" width="1" height="1" fill="#666666" />
<rect x="404" y="146" width="1" height="1" fill="#ffffff" />
<rect x="405" y="147" width="1" height="1" fill="#666666" />
<rect x="402" y="148" width="1" height="1" fill="#ffffff" />
<rect x="403" y="149" width="1" height="1" fill="#666666" />
<rect x="404" y="150" width="1" height="1" fill="#ffffff" />
<rect x="405" y="151" width="1" height="1" fill="#666666" />
<rect x="402" y="152" width="1" height="1" fill="#ffffff" />
<rect x="403" y="153" width="1" height="1" fill="#666666" />
<rect x="404" y="154" width="1" height="1" fill="#ffffff" />
<rect x="405" y="155" width="1" height="1" fill="#666666" />
<rect x="402" y="156" width="1" height="1" fill="#ffffff" />
<rect x="403" y="157" width="1" height="1" fill="#666666" />
<rect x="404" y="158" width="1" height="1" fill="#ffffff" />
<rect x="405" y="159" width="1" height="1" fill="#666666" />
<rect x="402" y="160" width="1" height="1" fill="#ffffff" />
<rect x="403" y="161" width="1" height="1" fill="#666666" />
<rect x="404" y="162" width="1" height="1" fill="#ffffff" />
<rect x="405" y="163" width="1" height="1" fill="#666666" />
<rect x="402" y="164" width="1" height="1" fill="#ffffff" />
<rect x="403" y="165" width="1" height="1" fill="#666666" />
<rect x="404" y="166" width="1" height="1" fill="#ffffff" />
<rect x="405" y="167" width="1" height="1" fill="#666666" />
<rect x="402" y="168" width="1" height="1" fill="#ffffff" />
<rect x="403" y="169" width="1" height="1" fill="#666666" />
<rect x="404" y="170" width="1" height="1" fill="#ffffff" />
<rect x="405" y="171" width="1" height="1" fill="#666666" />
<rect x="402" y="172" width="1" height="1" fill="#ffffff" />
<rect x="403" y="173" width="1" height="1" fill="#666666" />
<rect x="404" y="174" width="1" height="1" fill="#ffffff" />
<rect x="405" y="175" width="1" height="1" fill="#666666" />
<rect x="402" y="176" width="1" height="1" fill="#ffffff" />
<rect x="403" y="177" width="1" height="1" fill="#666666" />
<rect x="404" y="178" width="1" height="1" fill="#ffffff" />
<rect x="405" y="179" width="1" height="1" fill="#666666" />
<rect x="402" y="180" width="1" height="1" fill="#ffffff" />
<rect x="403" y="181" width="1" height="1" fill="#666666" />
<rect x="404" y="182" width="1" height="1" fill="#ffffff" />
<rect x="405" y="183" width="1" height="1" fill="#666666" />
<rect x="402" y="184" width="1" height="1" fill="#ffffff" />
<rect x="403" y="185" width="1" height="1" fill="#666666" />
<rect x="404" y="186" width="1" height="1" fill="#ffffff" />
<rect x="405" y="187" width="1" height="1" fill="#666666" />
<rect x="402" y="188" width="1" height="1" fill="#ffffff" />
<rect x="403" y="189" width="1" height="1" fill="#666666" />
<rect x="404" y="190" width="1" height="1" fill="#ffffff" />
<rect x="405" y="191" width="1" height="1" fill="#666666" />
<rect x="402" y="192" width="1" height="1" fill="#ffffff" />
<rect x="403" y="193" width="1" height="1" fill="#666666" />
<rect x="404" y="194" width="1" height="1" fill="#ffffff" />
<rect x="405" y="195" width="1" height="1" fill="#666666" />
<rect x="402" y="196" width="1" height="1" fill="#ffffff" />
<rect x="403" y="197" width="1" height="1" fill="#666666" />
<rect x="404" y="198" width="1" height="1" fill="#ffffff" />
<rect x="405" y="199" width="1" height="1" fill="#666666" />
<rect x="402" y="200" width="1" height="1" fill="#ffffff" />
<rect x="403" y="201" width="1" height="1" fill="#666666" />
<rect x="404" y="202" width="1" height="1" fill="#ffffff" />
<rect x="405" y="203" width="1" height="1" fill="#666666" />
<rect x="402" y="204" width="1" height="1" fill="#ffffff" />
<rect x="403" y="205" width="1" height="1" fill="#666666" />
<rect x="404" y="206" width="1" height="1" fill="#ffffff" />
<rect x="405" y="207" width="1" height="1" fill="#666666" />
<rect x="402" y="208" width="1" height="1" fill="#ffffff" />
<rect x="403" y="209" width="1" height="1" fill="#666666" />
<rect x="404" y="210" width="1" height="1" fill="#ffffff" />
<rect x="405" y="211" width="1" height="1" fill="#666666" />
<rect x="402" y="212" width="1" height="1" fill="#ffffff" />
<rect x="403" y="213" width="1" height="1" fill="#666666" />
<rect x="404" y="214" width="1" height="1" fill="#ffffff" />
<rect x="405" y="215" width="1" height="1" fill="#666666" />
<rect x="402" y="216" width="1" height="1" fill="#ffffff" />
<rect x="403" y="217" width="1" height="1" fill="#666666" />
<rect x="404" y="218" width="1" height="1" fill="#ffffff" />
<rect x="405" y="219" width="1" height="1" fill="#666666" />
<rect x="402" y="220" width="1" height="1" fill="#ffffff" />
<rect x="403" y="221" width="1" height="1" fill="#666666" />
<rect x="404" y="222" width="1" height="1" fill="#ffffff" />
<rect x="405" y="223" width="1" height="1" fill="#666666" />
<rect x="402" y="224" width="1" height="1" fill="#ffffff" />
<rect x="403" y="225" width="1" height="1" fill="#666666" />
<rect x="404" y="226" width="1" height="1" fill="#ffffff" />
<rect x="405" y="227" width="1" height="1" fill="#666666" />
<rect x="402" y="228" width="1" height="1" fill="#ffffff" />
<rect x="403" y="229" width="1" height="1" fill="#666666" />
<rect x="404" y="230" width="1" height="1" fill="#ffffff" />
<rect x="405" y="231" width="1" height="1" fill="#666666" />
<rect x="402" y="232" width="1" height="1" fill="#ffffff" />
<rect x="403" y="233" width="1" height="1" fill="#666666" />
<rect x="404" y="234" width="1" height="1" fill="#ffffff" />
<rect x="405" y="235" width="1" height="1" fill="#666666" />
<rect x="402" y="236" width="1" height="1" fill="#ffffff" />
<rect x="403" y="237" width="1" height="1" fill="#666666" />
<rect x="404" y="238" width="1" height="1" fill="#ffffff" />
<rect x="405" y="239" width="1" height="1" fill="#666666" />
<rect x="402" y="240" width="1" height="1" fill="#ffffff" />
<rect x="403" y="241" width="1" height="1" fill="#666666" />
<rect x="404" y="242" width="1" height="1" fill="#ffffff" />
<rect x="405" y="243" width="1" height="1" fill="#666666" />
<rect x="402" y="244" width="1" height="1" fill="#ffffff" />
<rect x="403" y="245" width="1" height="1" fill="#666666" />
<rect x="404" y="246" width="1" height="1" fill="#ffffff" />
<rect x="405" y="247" width="1" height="1" fill="#666666" />
<rect x="402" y="248" width="1" height="1" fill="#ffffff" />
<rect x="403" y="249" width="1" height="1" fill="#666666" />
<rect x="404" y="250" width="1" height="1" fill="#ffffff" />
<rect x="405" y="251" width="1" height="1" fill="#666666" />
<rect x="402" y="252" width="1" height="1" fill="#ffffff" />
<rect x="403" y="253" width="1" height="1" fill="#666666" />
<rect x="404" y="254" width="1" height="1" fill="#ffffff" />
<rect x="405" y="255" width="1" height="1" fill="#666666" />
<rect x="402" y="256" width="1" height="1" fill="#ffffff" />
<rect x="403" y="257" width="1" height="1" fill="#666666" />
<rect x="404" y="258" width="1" height="1" fill="#ffffff" />
<rect x="405" y="259" width="1" height="1" fill="#666666" />
<rect x="402" y="260" width="1" height="1" fill="#ffffff" />
<rect x="403" y="261" width="1" height="1" fill="#666666" />
<rect x="404" y="262" width="1" height="1" fill="#ffffff" />
<rect x="405" y="263" width="1" height="1" fill="#666666" />
<rect x="402" y="264" width="1" height="1" fill="#ffffff" />
<rect x="403" y="265" width="1" height="1" fill="#666666" />
<rect x="404" y="266" width="1" height="1" fill="#ffffff" />
<rect x="405" y="267" width="1" height="1" fill="#666666" />
<rect x="402" y="268" width="1" height="1" fill="#ffffff" />
<rect x="403" y="269" width="1" height="1" fill="#666666" />
<rect x="404" y="270" width="1" height="1" fill="#ffffff" />
<rect x="405" y="271" width="1" height="1" fill="#666666" />
<rect x="402" y="272" width="1" height="1" fill="#ffffff" />
<rect x="403" y="273" width="1" height="1" fill="#666666" />
<rect x="404" y="274" width="1" height="1" fill="#ffffff" />
<rect x="405" y="275" width="1" height="1" fill="#666666" />
<rect x="402" y="276" width="1" height="1" fill="#ffffff" />
<rect x="403" y="277" width="1" height="1" fill="#666666" />
<rect x="404" y="278" width="1" height="1" fill="#ffffff" />
<rect x="405" y="279" width="1" height="1" fill="#666666" />
<rect x="402" y="280" width="1" height="1" fill="#ffffff" />
<rect x="403" y="281" width="1" height="1" fill="#666666" />
<rect x="404" y="282" width="1" height="1" fill="#ffffff" />
<rect x="405" y="283" width="1" height="1" fill="#666666" />
<rect x="402" y="284" width="1" height="1" fill="#ffffff" />
<rect x="403" y="285" width="1" height="1" fill="#666666" />
<rect x="404" y="286" width="1" height="1" fill="#ffffff" />
<rect x="405" y="287" width="1" height="1" fill="#666666" />
<rect x="402" y="288" width="1" height="1" fill="#ffffff" />
<rect x="403" y="289" width="1" height="1" fill="#666666" />
<rect x="404" y="290" width="1" height="1" fill="#ffffff" />
<rect x="405" y="291" width="1" height="1" fill="#666666" />
<rect x="402" y="292" width="1" height="1" fill="#ffffff" />
<rect x="403" y="293" width="1" height="1" fill="#666666" />
<rect x="404" y="294" width="1" height="1" fill="#ffffff" />
<rect x="405" y="295" width="1" height="1" fill="#666666" />
<rect x="402" y="296" width="1" height="1" fill="#ffffff" />
<rect x="403" y="297" width="1" height="1" fill="#666666" />
<rect x="404" y="298" width="1" height="1" fill="#ffffff" />
<rect x="405" y="299" width="1" height="1" fill="#666666" />
<rect x="402" y="300" width="1" height="1" fill="#ffffff" />
<rect x="403" y="301" width="1" height="1" fill="#666666" />
<rect x="404" y="302" width="1" height="1" fill="#ffffff" />
<rect x="405" y="303" width="1" height="1" fill="#666666" />
<rect x="402" y="304" width="1" height="1" fill="#ffffff" />
<rect x="403" y="305" width="1" height="1" fill="#666666" />
<rect x="404" y="306" width="1" height="1" fill="#ffffff" />
<rect x="405" y="307" width="1" height="1" fill="#666666" />
<rect x="402" y="308" width="1" height="1" fill="#ffffff" />
<rect x="403" y="309" width="1" height="1" fill="#666666" />
<rect x="404" y="310" width="1" height="1" fill="#ffffff" />
<rect x="405" y="311" width="1" height="1" fill="#666666" />
<rect x="402" y="312" width="1" height="1" fill="#ffffff" />
<rect x="403" y="313" width="1" height="1" fill="#666666" />
<rect x="404" y="314" width="1" height="1" fill="#ffffff" />
<rect x="405" y="315" width="1" height="1" fill="#666666" />
<rect x="402" y="316" width="1" height="1" fill="#ffffff" />
<rect x="403" y="317" width="1" height="1" fill="#666666" />
<rect x="404" y="318" width="1" height="1" fill="#ffffff" />
<rect x="405" y="319" width="1" height="1" fill="#666666" />
<rect x="402" y="320" width="1" height="1" fill="#ffffff" />
<rect x="403" y="321" width="1" height="1" fill="#666666" />
<rect x="404" y="322" width="1" height="1" fill="#ffffff" />
<rect x="405" y="323" width="1" height="1" fill="#666666" />
<rect x="402" y="324" width="1" height="1" fill="#ffffff" />
<rect x="403" y="325" width="1" height="1" fill="#666666" />
<rect x="404" y="326" width="1" height="1" fill="#ffffff" />
<rect x="405" y="327" width="1" height="1" fill="#666666" />
<rect x="402" y="328" width="1" height="1" fill="#ffffff" />
<rect x="403" y="329" width="1" height="1" fill="#666666" />
<rect x="404" y="330" width="1" height="1" fill="#ffffff" />
<rect x="405" y="331" width="1" height="1" fill="#666666" />
<rect x="402" y="332" width="1" height="1" fill="#ffffff" />
<rect x="403" y="333" width="1" height="1" fill="#666666" />
<rect x="404" y="334" width="1" height="1" fill="#ffffff" />
<rect x="405" y="335" width="1" height="1" fill="#666666" />
<rect x="402" y="336" width="1" height="1" fill="#ffffff" />
<rect x="403" y="337" width="1" height="1" fill="#666666" />
<rect x="404" y="338" width="1" height="1" fill="#ffffff" />
<rect x="405" y="339" width="1" height="1" fill="#666666" />
<rect x="402" y="340" width="1" height="1" fill="#ffffff" />
<rect x="403" y="341" width="1" height="1" fill="#666666" />
<rect x="404" y="342" width="1" height="1" fill="#ffffff" />
<rect x="405" y="343" width="1" height="1" fill="#666666" />
<rect x="402" y="344" width="1" height="1" fill="#ffffff" />
<rect x="403" y="345" width="1" height="1" fill="#666666" />
<rect x="404" y="346" width="1" height="1" fill="#ffffff" />
<rect x="405" y="347" width="1" height="1" fill="#666666" />
<rect x="402" y="348" width="1" height="1" fill="#ffffff" />
<rect x="403" y="349" width="1" height="1" fill="#666666" />
<rect x="404" y="350" width="1" height="1" fill="#ffffff" />
<rect x="405" y="351" width="1" height="1" fill="#666666" />
<rect x="402" y="352" width="1" height="1" fill="#ffffff" />
<rect x="403" y="353" width="1" height="1" fill="#666666" />
<rect x="404" y="354" width="1" height="1" fill="#ffffff" />
<rect x="405" y="355" width="1" height="1" fill="#666666" />
<rect x="402" y="356" width="1" height="1" fill="#ffffff" />
<rect x="403" y="357" width="1" height="1" fill="#666666" />
<rect x="404" y="358" width="1" height="1" fill="#ffffff" />
<rect x="405" y="359" width="1" height="1" fill="#666666" />
<rect x="402" y="360" width="1" height="1" fill="#ffffff" />
<rect x="403" y="361" width="1" height="1" fill="#666666" />
<rect x="404" y="362" width="1" height="1" fill="#ffffff" />
<rect x="405" y="363" width="1" height="1" fill="#666666" />
<rect x="402" y="364" width="1" height="1" fill="#ffffff" />
<rect x="403" y="365" width="1" height="1" fill="#666666" />
<rect x="404" y="366" width="1" height="1" fill="#ffffff" />
<rect x="405" y="367" width="1" height="1" fill="#666666" />
<rect x="402" y="368" width="1" height="1" fill="#ffffff" />
<rect x="403" y="369" width="1" height="1" fill="#666666" />
<rect x="404" y="370" width="1" height="1" fill="#ffffff" />
<rect x="405" y="371" width="1" height="1" fill="#666666" />
<rect x="402" y="372" width="1" height="1" fill="#ffffff" />
<rect x="403" y="373" width="1" height="1" fill="#666666" />
<rect x="404" y="374" width="1" height="1" fill="#ffffff" />
<rect x="405" y="375" width="1" height="1" fill="#666666" />
<rect x="402" y="376" width="1" height="1" fill="#ffffff" />
<rect x="403" y="377" width="1" height="1" fill="#666666" />
<rect x="404" y="378" width="1" height="1" fill="#ffffff" />
<rect x="405" y="379" width="1" height="1" fill="#666666" />
<rect x="402" y="380" width="1" height="1" fill="#ffffff" />
<rect x="403" y="381" width="1" height="1" fill="#666666" />
<rect x="404" y="382" width="1" height="1" fill="#ffffff" />
<rect x="405" y="383" width="1" height="1" fill="#666666" />
<rect x="402" y="384" width="1" height="1" fill="#ffffff" />
<rect x="403" y="385" width="1" height="1" fill="#666666" />
<rect x="404" y="386" width="1" height="1" fill="#ffffff" />
<rect x="405" y="387" width="1" height="1" fill="#666666" />
<rect x="402" y="388" width="1" height="1" fill="#ffffff" />
<rect x="403" y="389" width="1" height="1" fill="#666666" />
<rect x="404" y="390" width="1" height="1" fill="#ffffff" />
<rect x="405" y="391" width="1" height="1" fill="#666666" />
<rect x="402" y="392" width="1" height="1" fill="#ffffff" />
<rect x="403" y="393" width="1" height="1" fill="#666666" />
<rect x="404" y="394" width="1" height="1" fill="#ffffff" />
<rect x="405" y="395" width="1" height="1" fill="#666666" />
<rect x="402" y="396" width="1" height="1" fill="#ffffff" />
<rect x="403" y="397" width="1" height="1" fill="#666666" />
<rect x="404" y="398" width="1" height="1" fill="#ffffff" />
<rect x="405" y="399" width="1" height="1" fill="#666666" />
<rect x="408" y="113" width="1" height="289" fill="#666666" />
<rect x="408" y="113" width="224" height="1" fill="#666666" />
<rect x="632" y="113" width="1" height="289" fill="#ffffff" />
<rect x="408" y="401" width="225" height="1" fill="#ffffff" />
<rect x="414" y="143" width="196" height="80" fill="#ffffff" />
<rect x="413" y="142" width="213" height="1" fill="#666666" />
<rect x="413" y="142" width="1" height="82" fill="#666666" />
<rect x="421" y="158" width="1" height="65" fill="#b8b8f0" />
<rect x="441" y="161" width="1" height="62" fill="#b8b8f0" />
<rect x="427" y="151" width="5" height="1" fill="#b8b8f0" />
<rect x="442" y="170" width="10" height="1" fill="#b8b8f0" />
<rect x="442" y="188" width="10" height="1" fill="#b8b8f0" />
<rect x="442" y="206" width="10" height="1" fill="#b8b8f0" />
<path d="M421.5 154 V159" stroke="#000" stroke-width="2"/><circle cx="421.5" cy="151" r="3.4" fill="#c8c8f0" stroke="#000" stroke-width="1.4"/><circle cx="421.5" cy="151" r="1" fill="#000"/>
<rect x="454" y="161" width="139" height="18" fill="#ccccff" />
<rect x="610" y="143" width="16" height="79" fill="#cccccc" />
<rect x="610" y="143" width="1" height="79" fill="#666666" />
<rect x="610" y="143" width="16" height="1" fill="#666666" />
<rect x="625" y="143" width="1" height="79" fill="#666666" />
<rect x="611" y="144" width="1" height="78" fill="#999999" />
<rect x="611" y="144" width="14" height="14" fill="#cccccc" />
<rect x="611" y="144" width="14" height="1" fill="#ffffff" />
<rect x="611" y="144" width="1" height="14" fill="#ffffff" />
<polygon points="614.4,153 623.6,153 619,148.4" fill="#000"/>
<rect x="611" y="207" width="14" height="14" fill="#cccccc" />
<rect x="611" y="207" width="14" height="1" fill="#ffffff" />
<rect x="611" y="207" width="1" height="14" fill="#ffffff" />
<rect x="611" y="206" width="14" height="1" fill="#666666" />
<polygon points="614.4,212 623.6,212 619,216.6" fill="#000"/>
<rect x="610" y="221" width="16" height="1" fill="#666666" />
<rect x="611" y="158" width="14" height="24" fill="#9999cc" />
<rect x="611" y="158" width="14" height="1" fill="#ccccff" />
<rect x="611" y="158" width="1" height="24" fill="#ccccff" />
<rect x="611" y="181" width="14" height="1" fill="#666699" />
<rect x="624" y="158" width="1" height="24" fill="#666699" />
<rect x="613" y="161" width="1" height="1" fill="#ccccff" />
<rect x="617" y="161" width="1" height="1" fill="#ccccff" />
<rect x="621" y="161" width="1" height="1" fill="#ccccff" />
<rect x="614" y="162" width="1" height="1" fill="#666699" />
<rect x="618" y="162" width="1" height="1" fill="#666699" />
<rect x="622" y="162" width="1" height="1" fill="#666699" />
<rect x="615" y="163" width="1" height="1" fill="#ccccff" />
<rect x="619" y="163" width="1" height="1" fill="#ccccff" />
<rect x="616" y="164" width="1" height="1" fill="#666699" />
<rect x="620" y="164" width="1" height="1" fill="#666699" />
<rect x="613" y="165" width="1" height="1" fill="#ccccff" />
<rect x="617" y="165" width="1" height="1" fill="#ccccff" />
<rect x="621" y="165" width="1" height="1" fill="#ccccff" />
<rect x="614" y="166" width="1" height="1" fill="#666699" />
<rect x="618" y="166" width="1" height="1" fill="#666699" />
<rect x="622" y="166" width="1" height="1" fill="#666699" />
<rect x="615" y="167" width="1" height="1" fill="#ccccff" />
<rect x="619" y="167" width="1" height="1" fill="#ccccff" />
<rect x="616" y="168" width="1" height="1" fill="#666699" />
<rect x="620" y="168" width="1" height="1" fill="#666699" />
<rect x="613" y="169" width="1" height="1" fill="#ccccff" />
<rect x="617" y="169" width="1" height="1" fill="#ccccff" />
<rect x="621" y="169" width="1" height="1" fill="#ccccff" />
<rect x="614" y="170" width="1" height="1" fill="#666699" />
<rect x="618" y="170" width="1" height="1" fill="#666699" />
<rect x="622" y="170" width="1" height="1" fill="#666699" />
<rect x="615" y="171" width="1" height="1" fill="#ccccff" />
<rect x="619" y="171" width="1" height="1" fill="#ccccff" />
<rect x="616" y="172" width="1" height="1" fill="#666699" />
<rect x="620" y="172" width="1" height="1" fill="#666699" />
<rect x="613" y="173" width="1" height="1" fill="#ccccff" />
<rect x="617" y="173" width="1" height="1" fill="#ccccff" />
<rect x="621" y="173" width="1" height="1" fill="#ccccff" />
<rect x="614" y="174" width="1" height="1" fill="#666699" />
<rect x="618" y="174" width="1" height="1" fill="#666699" />
<rect x="622" y="174" width="1" height="1" fill="#666699" />
<rect x="615" y="175" width="1" height="1" fill="#ccccff" />
<rect x="619" y="175" width="1" height="1" fill="#ccccff" />
<rect x="616" y="176" width="1" height="1" fill="#666699" />
<rect x="620" y="176" width="1" height="1" fill="#666699" />
<rect x="613" y="177" width="1" height="1" fill="#ccccff" />
<rect x="617" y="177" width="1" height="1" fill="#ccccff" />
<rect x="621" y="177" width="1" height="1" fill="#ccccff" />
<rect x="614" y="178" width="1" height="1" fill="#666699" />
<rect x="618" y="178" width="1" height="1" fill="#666699" />
<rect x="622" y="178" width="1" height="1" fill="#666699" />
<rect x="626" y="142" width="1" height="82" fill="#cccccc" />
<rect x="627" y="142" width="1" height="82" fill="#ffffff" />
<rect x="417" y="227" width="1" height="1" fill="#666666" />
<rect x="421" y="227" width="1" height="1" fill="#666666" />
<rect x="425" y="227" width="1" height="1" fill="#666666" />
<rect x="429" y="227" width="1" height="1" fill="#666666" />
<rect x="433" y="227" width="1" height="1" fill="#666666" />
<rect x="437" y="227" width="1" height="1" fill="#666666" />
<rect x="441" y="227" width="1" height="1" fill="#666666" />
<rect x="445" y="227" width="1" height="1" fill="#666666" />
<rect x="449" y="227" width="1" height="1" fill="#666666" />
<rect x="453" y="227" width="1" height="1" fill="#666666" />
<rect x="457" y="227" width="1" height="1" fill="#666666" />
<rect x="461" y="227" width="1" height="1" fill="#666666" />
<rect x="465" y="227" width="1" height="1" fill="#666666" />
<rect x="469" y="227" width="1" height="1" fill="#666666" />
<rect x="473" y="227" width="1" height="1" fill="#666666" />
<rect x="477" y="227" width="1" height="1" fill="#666666" />
<rect x="481" y="227" width="1" height="1" fill="#666666" />
<rect x="485" y="227" width="1" height="1" fill="#666666" />
<rect x="489" y="227" width="1" height="1" fill="#666666" />
<rect x="493" y="227" width="1" height="1" fill="#666666" />
<rect x="497" y="227" width="1" height="1" fill="#666666" />
<rect x="501" y="227" width="1" height="1" fill="#666666" />
<rect x="505" y="227" width="1" height="1" fill="#666666" />
<rect x="509" y="227" width="1" height="1" fill="#666666" />
<rect x="513" y="227" width="1" height="1" fill="#666666" />
<rect x="517" y="227" width="1" height="1" fill="#666666" />
<rect x="521" y="227" width="1" height="1" fill="#666666" />
<rect x="525" y="227" width="1" height="1" fill="#666666" />
<rect x="529" y="227" width="1" height="1" fill="#666666" />
<rect x="533" y="227" width="1" height="1" fill="#666666" />
<rect x="537" y="227" width="1" height="1" fill="#666666" />
<rect x="541" y="227" width="1" height="1" fill="#666666" />
<rect x="545" y="227" width="1" height="1" fill="#666666" />
<rect x="549" y="227" width="1" height="1" fill="#666666" />
<rect x="553" y="227" width="1" height="1" fill="#666666" />
<rect x="557" y="227" width="1" height="1" fill="#666666" />
<rect x="561" y="227" width="1" height="1" fill="#666666" />
<rect x="565" y="227" width="1" height="1" fill="#666666" />
<rect x="569" y="227" width="1" height="1" fill="#666666" />
<rect x="573" y="227" width="1" height="1" fill="#666666" />
<rect x="577" y="227" width="1" height="1" fill="#666666" />
<rect x="581" y="227" width="1" height="1" fill="#666666" />
<rect x="585" y="227" width="1" height="1" fill="#666666" />
<rect x="589" y="227" width="1" height="1" fill="#666666" />
<rect x="593" y="227" width="1" height="1" fill="#666666" />
<rect x="597" y="227" width="1" height="1" fill="#666666" />
<rect x="601" y="227" width="1" height="1" fill="#666666" />
<rect x="605" y="227" width="1" height="1" fill="#666666" />
<rect x="609" y="227" width="1" height="1" fill="#666666" />
<rect x="613" y="227" width="1" height="1" fill="#666666" />
<rect x="617" y="227" width="1" height="1" fill="#666666" />
<rect x="621" y="227" width="1" height="1" fill="#666666" />
<rect x="625" y="227" width="1" height="1" fill="#666666" />
<rect x="418" y="228" width="1" height="1" fill="#ffffff" />
<rect x="422" y="228" width="1" height="1" fill="#ffffff" />
<rect x="426" y="228" width="1" height="1" fill="#ffffff" />
<rect x="430" y="228" width="1" height="1" fill="#ffffff" />
<rect x="434" y="228" width="1" height="1" fill="#ffffff" />
<rect x="438" y="228" width="1" height="1" fill="#ffffff" />
<rect x="442" y="228" width="1" height="1" fill="#ffffff" />
<rect x="446" y="228" width="1" height="1" fill="#ffffff" />
<rect x="450" y="228" width="1" height="1" fill="#ffffff" />
<rect x="454" y="228" width="1" height="1" fill="#ffffff" />
<rect x="458" y="228" width="1" height="1" fill="#ffffff" />
<rect x="462" y="228" width="1" height="1" fill="#ffffff" />
<rect x="466" y="228" width="1" height="1" fill="#ffffff" />
<rect x="470" y="228" width="1" height="1" fill="#ffffff" />
<rect x="474" y="228" width="1" height="1" fill="#ffffff" />
<rect x="478" y="228" width="1" height="1" fill="#ffffff" />
<rect x="482" y="228" width="1" height="1" fill="#ffffff" />
<rect x="486" y="228" width="1" height="1" fill="#ffffff" />
<rect x="490" y="228" width="1" height="1" fill="#ffffff" />
<rect x="494" y="228" width="1" height="1" fill="#ffffff" />
<rect x="498" y="228" width="1" height="1" fill="#ffffff" />
<rect x="502" y="228" width="1" height="1" fill="#ffffff" />
<rect x="506" y="228" width="1" height="1" fill="#ffffff" />
<rect x="510" y="228" width="1" height="1" fill="#ffffff" />
<rect x="514" y="228" width="1" height="1" fill="#ffffff" />
<rect x="518" y="228" width="1" height="1" fill="#ffffff" />
<rect x="522" y="228" width="1" height="1" fill="#ffffff" />
<rect x="526" y="228" width="1" height="1" fill="#ffffff" />
<rect x="530" y="228" width="1" height="1" fill="#ffffff" />
<rect x="534" y="228" width="1" height="1" fill="#ffffff" />
<rect x="538" y="228" width="1" height="1" fill="#ffffff" />
<rect x="542" y="228" width="1" height="1" fill="#ffffff" />
<rect x="546" y="228" width="1" height="1" fill="#ffffff" />
<rect x="550" y="228" width="1" height="1" fill="#ffffff" />
<rect x="554" y="228" width="1" height="1" fill="#ffffff" />
<rect x="558" y="228" width="1" height="1" fill="#ffffff" />
<rect x="562" y="228" width="1" height="1" fill="#ffffff" />
<rect x="566" y="228" width="1" height="1" fill="#ffffff" />
<rect x="570" y="228" width="1" height="1" fill="#ffffff" />
<rect x="574" y="228" width="1" height="1" fill="#ffffff" />
<rect x="578" y="228" width="1" height="1" fill="#ffffff" />
<rect x="582" y="228" width="1" height="1" fill="#ffffff" />
<rect x="586" y="228" width="1" height="1" fill="#ffffff" />
<rect x="590" y="228" width="1" height="1" fill="#ffffff" />
<rect x="594" y="228" width="1" height="1" fill="#ffffff" />
<rect x="598" y="228" width="1" height="1" fill="#ffffff" />
<rect x="602" y="228" width="1" height="1" fill="#ffffff" />
<rect x="606" y="228" width="1" height="1" fill="#ffffff" />
<rect x="610" y="228" width="1" height="1" fill="#ffffff" />
<rect x="614" y="228" width="1" height="1" fill="#ffffff" />
<rect x="618" y="228" width="1" height="1" fill="#ffffff" />
<rect x="622" y="228" width="1" height="1" fill="#ffffff" />
<rect x="626" y="228" width="1" height="1" fill="#ffffff" />
<rect x="419" y="229" width="1" height="1" fill="#666666" />
<rect x="423" y="229" width="1" height="1" fill="#666666" />
<rect x="427" y="229" width="1" height="1" fill="#666666" />
<rect x="431" y="229" width="1" height="1" fill="#666666" />
<rect x="435" y="229" width="1" height="1" fill="#666666" />
<rect x="439" y="229" width="1" height="1" fill="#666666" />
<rect x="443" y="229" width="1" height="1" fill="#666666" />
<rect x="447" y="229" width="1" height="1" fill="#666666" />
<rect x="451" y="229" width="1" height="1" fill="#666666" />
<rect x="455" y="229" width="1" height="1" fill="#666666" />
<rect x="459" y="229" width="1" height="1" fill="#666666" />
<rect x="463" y="229" width="1" height="1" fill="#666666" />
<rect x="467" y="229" width="1" height="1" fill="#666666" />
<rect x="471" y="229" width="1" height="1" fill="#666666" />
<rect x="475" y="229" width="1" height="1" fill="#666666" />
<rect x="479" y="229" width="1" height="1" fill="#666666" />
<rect x="483" y="229" width="1" height="1" fill="#666666" />
<rect x="487" y="229" width="1" height="1" fill="#666666" />
<rect x="491" y="229" width="1" height="1" fill="#666666" />
<rect x="495" y="229" width="1" height="1" fill="#666666" />
<rect x="499" y="229" width="1" height="1" fill="#666666" />
<rect x="503" y="229" width="1" height="1" fill="#666666" />
<rect x="507" y="229" width="1" height="1" fill="#666666" />
<rect x="511" y="229" width="1" height="1" fill="#666666" />
<rect x="515" y="229" width="1" height="1" fill="#666666" />
<rect x="519" y="229" width="1" height="1" fill="#666666" />
<rect x="523" y="229" width="1" height="1" fill="#666666" />
<rect x="527" y="229" width="1" height="1" fill="#666666" />
<rect x="531" y="229" width="1" height="1" fill="#666666" />
<rect x="535" y="229" width="1" height="1" fill="#666666" />
<rect x="539" y="229" width="1" height="1" fill="#666666" />
<rect x="543" y="229" width="1" height="1" fill="#666666" />
<rect x="547" y="229" width="1" height="1" fill="#666666" />
<rect x="551" y="229" width="1" height="1" fill="#666666" />
<rect x="555" y="229" width="1" height="1" fill="#666666" />
<rect x="559" y="229" width="1" height="1" fill="#666666" />
<rect x="563" y="229" width="1" height="1" fill="#666666" />
<rect x="567" y="229" width="1" height="1" fill="#666666" />
<rect x="571" y="229" width="1" height="1" fill="#666666" />
<rect x="575" y="229" width="1" height="1" fill="#666666" />
<rect x="579" y="229" width="1" height="1" fill="#666666" />
<rect x="583" y="229" width="1" height="1" fill="#666666" />
<rect x="587" y="229" width="1" height="1" fill="#666666" />
<rect x="591" y="229" width="1" height="1" fill="#666666" />
<rect x="595" y="229" width="1" height="1" fill="#666666" />
<rect x="599" y="229" width="1" height="1" fill="#666666" />
<rect x="603" y="229" width="1" height="1" fill="#666666" />
<rect x="607" y="229" width="1" height="1" fill="#666666" />
<rect x="611" y="229" width="1" height="1" fill="#666666" />
<rect x="615" y="229" width="1" height="1" fill="#666666" />
<rect x="619" y="229" width="1" height="1" fill="#666666" />
<rect x="623" y="229" width="1" height="1" fill="#666666" />
<rect x="413" y="232" width="214" height="1" fill="#666666" />
<rect x="413" y="395" width="214" height="1" fill="#666666" />
<rect x="413" y="232" width="1" height="164" fill="#666666" />
<rect x="626" y="232" width="1" height="164" fill="#666666" />
<rect x="627" y="232" width="1" height="165" fill="#ffffff" />
<rect x="413" y="396" width="215" height="1" fill="#ffffff" />
<polygon points="467,244 473,238 514,238 514,254 467,254" fill="#999999"/>
<rect x="466" y="243" width="1" height="1" fill="#666666" />
<rect x="467" y="242" width="1" height="1" fill="#666666" />
<rect x="468" y="241" width="1" height="1" fill="#666666" />
<rect x="469" y="240" width="1" height="1" fill="#666666" />
<rect x="470" y="239" width="1" height="1" fill="#666666" />
<rect x="471" y="238" width="1" height="1" fill="#666666" />
<rect x="472" y="237" width="1" height="1" fill="#666666" />
<rect x="472" y="237" width="43" height="1" fill="#666666" />
<rect x="514" y="238" width="1" height="16" fill="#666666" />
<rect x="467" y="243" width="1" height="1" fill="#cccccc" />
<rect x="468" y="242" width="1" height="1" fill="#cccccc" />
<rect x="469" y="241" width="1" height="1" fill="#cccccc" />
<rect x="470" y="240" width="1" height="1" fill="#cccccc" />
<rect x="471" y="239" width="1" height="1" fill="#cccccc" />
<rect x="472" y="238" width="1" height="1" fill="#cccccc" />
<rect x="473" y="238" width="41" height="1" fill="#cccccc" />
<rect x="467" y="243" width="1" height="11" fill="#cccccc" />
<polygon points="417,244 423,238 466,238 466,255 417,255" fill="#cccccc"/>
<rect x="416" y="243" width="1" height="1" fill="#666666" />
<rect x="417" y="242" width="1" height="1" fill="#666666" />
<rect x="418" y="241" width="1" height="1" fill="#666666" />
<rect x="419" y="240" width="1" height="1" fill="#666666" />
<rect x="420" y="239" width="1" height="1" fill="#666666" />
<rect x="421" y="238" width="1" height="1" fill="#666666" />
<rect x="422" y="237" width="1" height="1" fill="#666666" />
<rect x="422" y="237" width="45" height="1" fill="#666666" />
<rect x="466" y="238" width="1" height="16" fill="#666666" />
<rect x="416" y="243" width="1" height="11" fill="#666666" />
<rect x="417" y="243" width="1" height="1" fill="#ffffff" />
<rect x="418" y="242" width="1" height="1" fill="#ffffff" />
<rect x="419" y="241" width="1" height="1" fill="#ffffff" />
<rect x="420" y="240" width="1" height="1" fill="#ffffff" />
<rect x="421" y="239" width="1" height="1" fill="#ffffff" />
<rect x="422" y="238" width="1" height="1" fill="#ffffff" />
<rect x="423" y="238" width="43" height="1" fill="#ffffff" />
<rect x="417" y="243" width="1" height="12" fill="#ffffff" />
<rect x="414" y="254" width="3" height="1" fill="#ffffff" />
<rect x="466" y="254" width="160" height="1" fill="#ffffff" />
<rect x="414" y="254" width="1" height="141" fill="#ffffff" />
<rect x="535" y="262" width="12" height="1" fill="#666666" />
<rect x="535" y="273" width="12" height="1" fill="#666666" />
<rect x="535" y="262" width="1" height="12" fill="#666666" />
<rect x="546" y="262" width="1" height="12" fill="#666666" />
<rect x="536" y="263" width="1" height="10" fill="#ffffff" />
<rect x="536" y="263" width="10" height="1" fill="#ffffff" />
<rect x="547" y="262" width="1" height="13" fill="#ffffff" />
<rect x="535" y="274" width="13" height="1" fill="#ffffff" />
<polygon points="538,267 540.5,267 540.5,269.2 545.2,264.6 546.2,265.6 540.8,271.6 538,271.6" fill="#000"/>
<rect x="417" y="281" width="190" height="110" fill="#ffffff" />
<rect x="417" y="301" width="190" height="90" fill="#ccccff" />
<rect x="416" y="280" width="207" height="1" fill="#666666" />
<rect x="416" y="280" width="1" height="112" fill="#666666" />
<rect x="416" y="391" width="207" height="1" fill="#666666" />
<rect x="416" y="392" width="208" height="1" fill="#ffffff" />
<rect x="607" y="281" width="16" height="111" fill="#cccccc" />
<rect x="607" y="281" width="1" height="111" fill="#666666" />
<rect x="607" y="281" width="16" height="1" fill="#666666" />
<rect x="622" y="281" width="1" height="111" fill="#666666" />
<rect x="608" y="282" width="1" height="110" fill="#999999" />
<rect x="608" y="282" width="14" height="50" fill="#cccccc" />
<rect x="608" y="282" width="14" height="1" fill="#ffffff" />
<rect x="608" y="282" width="1" height="50" fill="#ffffff" />
<polygon points="611.4,291 620.6,291 616,286.4" fill="#000"/>
<rect x="608" y="377" width="14" height="14" fill="#cccccc" />
<rect x="608" y="377" width="14" height="1" fill="#ffffff" />
<rect x="608" y="377" width="1" height="14" fill="#ffffff" />
<rect x="608" y="376" width="14" height="1" fill="#666666" />
<polygon points="611.4,382 620.6,382 616,386.6" fill="#000"/>
<rect x="607" y="391" width="16" height="1" fill="#666666" />
<rect x="608" y="332" width="14" height="44" fill="#9999cc" />
<rect x="608" y="332" width="14" height="1" fill="#ccccff" />
<rect x="608" y="332" width="1" height="44" fill="#ccccff" />
<rect x="608" y="375" width="14" height="1" fill="#666699" />
<rect x="621" y="332" width="1" height="44" fill="#666699" />
<rect x="610" y="335" width="1" height="1" fill="#ccccff" />
<rect x="614" y="335" width="1" height="1" fill="#ccccff" />
<rect x="618" y="335" width="1" height="1" fill="#ccccff" />
<rect x="611" y="336" width="1" height="1" fill="#666699" />
<rect x="615" y="336" width="1" height="1" fill="#666699" />
<rect x="619" y="336" width="1" height="1" fill="#666699" />
<rect x="612" y="337" width="1" height="1" fill="#ccccff" />
<rect x="616" y="337" width="1" height="1" fill="#ccccff" />
<rect x="613" y="338" width="1" height="1" fill="#666699" />
<rect x="617" y="338" width="1" height="1" fill="#666699" />
<rect x="610" y="339" width="1" height="1" fill="#ccccff" />
<rect x="614" y="339" width="1" height="1" fill="#ccccff" />
<rect x="618" y="339" width="1" height="1" fill="#ccccff" />
<rect x="611" y="340" width="1" height="1" fill="#666699" />
<rect x="615" y="340" width="1" height="1" fill="#666699" />
<rect x="619" y="340" width="1" height="1" fill="#666699" />
<rect x="612" y="341" width="1" height="1" fill="#ccccff" />
<rect x="616" y="341" width="1" height="1" fill="#ccccff" />
<rect x="613" y="342" width="1" height="1" fill="#666699" />
<rect x="617" y="342" width="1" height="1" fill="#666699" />
<rect x="610" y="343" width="1" height="1" fill="#ccccff" />
<rect x="614" y="343" width="1" height="1" fill="#ccccff" />
<rect x="618" y="343" width="1" height="1" fill="#ccccff" />
<rect x="611" y="344" width="1" height="1" fill="#666699" />
<rect x="615" y="344" width="1" height="1" fill="#666699" />
<rect x="619" y="344" width="1" height="1" fill="#666699" />
<rect x="612" y="345" width="1" height="1" fill="#ccccff" />
<rect x="616" y="345" width="1" height="1" fill="#ccccff" />
<rect x="613" y="346" width="1" height="1" fill="#666699" />
<rect x="617" y="346" width="1" height="1" fill="#666699" />
<rect x="610" y="347" width="1" height="1" fill="#ccccff" />
<rect x="614" y="347" width="1" height="1" fill="#ccccff" />
<rect x="618" y="347" width="1" height="1" fill="#ccccff" />
<rect x="611" y="348" width="1" height="1" fill="#666699" />
<rect x="615" y="348" width="1" height="1" fill="#666699" />
<rect x="619" y="348" width="1" height="1" fill="#666699" />
<rect x="612" y="349" width="1" height="1" fill="#ccccff" />
<rect x="616" y="349" width="1" height="1" fill="#ccccff" />
<rect x="613" y="350" width="1" height="1" fill="#666699" />
<rect x="617" y="350" width="1" height="1" fill="#666699" />
<rect x="610" y="351" width="1" height="1" fill="#ccccff" />
<rect x="614" y="351" width="1" height="1" fill="#ccccff" />
<rect x="618" y="351" width="1" height="1" fill="#ccccff" />
<rect x="611" y="352" width="1" height="1" fill="#666699" />
<rect x="615" y="352" width="1" height="1" fill="#666699" />
<rect x="619" y="352" width="1" height="1" fill="#666699" />
<rect x="612" y="353" width="1" height="1" fill="#ccccff" />
<rect x="616" y="353" width="1" height="1" fill="#ccccff" />
<rect x="613" y="354" width="1" height="1" fill="#666699" />
<rect x="617" y="354" width="1" height="1" fill="#666699" />
<rect x="610" y="355" width="1" height="1" fill="#ccccff" />
<rect x="614" y="355" width="1" height="1" fill="#ccccff" />
<rect x="618" y="355" width="1" height="1" fill="#ccccff" />
<rect x="611" y="356" width="1" height="1" fill="#666699" />
<rect x="615" y="356" width="1" height="1" fill="#666699" />
<rect x="619" y="356" width="1" height="1" fill="#666699" />
<rect x="612" y="357" width="1" height="1" fill="#ccccff" />
<rect x="616" y="357" width="1" height="1" fill="#ccccff" />
<rect x="613" y="358" width="1" height="1" fill="#666699" />
<rect x="617" y="358" width="1" height="1" fill="#666699" />
<rect x="610" y="359" width="1" height="1" fill="#ccccff" />
<rect x="614" y="359" width="1" height="1" fill="#ccccff" />
<rect x="618" y="359" width="1" height="1" fill="#ccccff" />
<rect x="611" y="360" width="1" height="1" fill="#666699" />
<rect x="615" y="360" width="1" height="1" fill="#666699" />
<rect x="619" y="360" width="1" height="1" fill="#666699" />
<rect x="612" y="361" width="1" height="1" fill="#ccccff" />
<rect x="616" y="361" width="1" height="1" fill="#ccccff" />
<rect x="613" y="362" width="1" height="1" fill="#666699" />
<rect x="617" y="362" width="1" height="1" fill="#666699" />
<rect x="610" y="363" width="1" height="1" fill="#ccccff" />
<rect x="614" y="363" width="1" height="1" fill="#ccccff" />
<rect x="618" y="363" width="1" height="1" fill="#ccccff" />
<rect x="611" y="364" width="1" height="1" fill="#666699" />
<rect x="615" y="364" width="1" height="1" fill="#666699" />
<rect x="619" y="364" width="1" height="1" fill="#666699" />
<rect x="612" y="365" width="1" height="1" fill="#ccccff" />
<rect x="616" y="365" width="1" height="1" fill="#ccccff" />
<rect x="613" y="366" width="1" height="1" fill="#666699" />
<rect x="617" y="366" width="1" height="1" fill="#666699" />
<rect x="610" y="367" width="1" height="1" fill="#ccccff" />
<rect x="614" y="367" width="1" height="1" fill="#ccccff" />
<rect x="618" y="367" width="1" height="1" fill="#ccccff" />
<rect x="611" y="368" width="1" height="1" fill="#666699" />
<rect x="615" y="368" width="1" height="1" fill="#666699" />
<rect x="619" y="368" width="1" height="1" fill="#666699" />
<rect x="612" y="369" width="1" height="1" fill="#ccccff" />
<rect x="616" y="369" width="1" height="1" fill="#ccccff" />
<rect x="613" y="370" width="1" height="1" fill="#666699" />
<rect x="617" y="370" width="1" height="1" fill="#666699" />
<rect x="610" y="371" width="1" height="1" fill="#ccccff" />
<rect x="614" y="371" width="1" height="1" fill="#ccccff" />
<rect x="618" y="371" width="1" height="1" fill="#ccccff" />
<rect x="611" y="372" width="1" height="1" fill="#666699" />
<rect x="615" y="372" width="1" height="1" fill="#666699" />
<rect x="619" y="372" width="1" height="1" fill="#666699" />
<rect x="623" y="280" width="1" height="113" fill="#ffffff" />
<rect x="351" y="407" width="115" height="1" fill="#666666" />
<rect x="351" y="431" width="115" height="1" fill="#666666" />
<rect x="351" y="407" width="1" height="25" fill="#666666" />
<rect x="465" y="407" width="1" height="25" fill="#666666" />
<rect x="352" y="408" width="1" height="25" fill="#ffffff" />
<rect x="352" y="408" width="115" height="1" fill="#ffffff" />
<rect x="466" y="407" width="1" height="26" fill="#ffffff" />
<rect x="351" y="432" width="116" height="1" fill="#ffffff" />
<rect x="7" y="444" width="152" height="1" fill="#666666" />
<rect x="7" y="444" width="1" height="18" fill="#666666" />
<rect x="7" y="462" width="153" height="1" fill="#ffffff" />
<rect x="159" y="444" width="1" height="19" fill="#ffffff" />
<rect x="160" y="444" width="344" height="1" fill="#666666" />
<rect x="160" y="444" width="1" height="18" fill="#666666" />
<rect x="160" y="462" width="345" height="1" fill="#ffffff" />
<rect x="504" y="444" width="1" height="19" fill="#ffffff" />
<rect x="505" y="444" width="128" height="1" fill="#666666" />
<rect x="505" y="444" width="1" height="18" fill="#666666" />
<rect x="505" y="462" width="129" height="1" fill="#ffffff" />
<rect x="633" y="444" width="1" height="19" fill="#ffffff" />
</svg>
<svg width="0" height="0" style="position:absolute;left:0;top:0"><filter id="aa" x="0" y="0" width="100%" height="100%" color-interpolation-filters="sRGB"><feComponentTransfer><feFuncA type="discrete" tableValues="0 1"/></feComponentTransfer></filter><filter id="ab" x="0" y="0" width="100%" height="100%" color-interpolation-filters="sRGB"><feComponentTransfer><feFuncA type="discrete" tableValues="0 0 1 1 1"/></feComponentTransfer></filter></svg>
<span class="t" style="left:25px;top:11px;font-size:13px;font-weight:bold;color:#fff;letter-spacing:-0.15px;text-shadow:1px 1px 0 #0a1f8c;">Dashboard</span>
<div style="position:absolute;left:0;top:0;width:640px;height:469px;filter:url(#aa);">
<span class="t" style="left:228px;top:142px;font-size:12px;font-weight:normal;color:#000;">Reflectivity</span>
<span class="t" style="left:228px;top:160px;font-size:12px;font-weight:normal;color:#000;letter-spacing:0.23px;">RadialVelocity</span>
<span class="t" style="left:228px;top:178px;font-size:12px;font-weight:normal;color:#000;letter-spacing:0.25px;">SpectrumWidth</span>
<span class="t" style="left:434px;top:146px;font-size:12px;font-weight:normal;color:#000;letter-spacing:0.2px;">Radar Views</span>
<span class="t" style="left:454px;top:164px;font-size:12px;font-weight:normal;color:#000;letter-spacing:0.1px;">Radar Sweep View in 2D</span>
<span class="t" style="left:454px;top:182px;font-size:12px;font-weight:normal;color:#000;letter-spacing:0.1px;">Radar Sweep View in 3D</span>
<span class="t" style="left:454px;top:200px;font-size:12px;font-weight:normal;color:#000;letter-spacing:0.1px;">RHI</span>
<div style="position:absolute;left:414px;top:143px;width:196px;height:80px;overflow:hidden"><span class="t" style="left:40px;top:75px;">CAPPI</span></div>
<span class="t" style="left:427px;top:240px;font-size:10px;font-weight:normal;color:#000;letter-spacing:0.6px;">Times</span>
<span class="t" style="left:475px;top:240px;font-size:10px;font-weight:normal;color:#000;letter-spacing:0.9px;">Level</span>
</div>
<div style="position:absolute;left:0;top:0;width:640px;height:469px;filter:url(#ab);">
<span class="t" style="left:9px;top:35px;font-size:12px;font-weight:bold;color:#000;"><u>F</u>ile</span>
<span class="t" style="left:40px;top:35px;font-size:12px;font-weight:bold;color:#000;"><u>E</u>dit</span>
<span class="t" style="left:73px;top:35px;font-size:12px;font-weight:bold;color:#000;"><u>D</u>isplays</span>
<span class="t" style="left:134px;top:35px;font-size:12px;font-weight:bold;color:#000;">D<u>a</u>ta</span>
<span class="t" style="left:173px;top:35px;font-size:12px;font-weight:bold;color:#000;"><u>T</u>ools</span>
<span class="t" style="left:215px;top:35px;font-size:12px;font-weight:bold;color:#000;"><u>H</u>elp</span>
<span class="t" style="left:439px;top:63px;font-size:12px;font-weight:bold;color:#000;">Workshop Bundles</span>
<span class="t" style="left:44px;top:92px;font-size:12px;font-weight:bold;color:#000;">Quicklinks</span>
<span class="t" style="left:153px;top:92px;font-size:12px;font-weight:bold;color:#000;">Data Choosers</span>
<span class="t" style="left:286px;top:92px;font-size:12px;font-weight:bold;color:#000;">Field Selector</span>
<span class="t" style="left:411px;top:92px;font-size:12px;font-weight:bold;color:#000;">Displays</span>
<span class="t" style="left:10px;top:121px;font-size:12px;font-weight:bold;color:#000;">Data Sources:</span>
<span class="t" style="left:18px;top:143px;font-size:12px;font-weight:bold;color:#000;">Formulas</span>
<span class="t" style="left:18px;top:165px;font-size:12px;font-weight:bold;color:#000;letter-spacing:-0.08px;">Level II Radar Data (DVN)</span>
<span class="t" style="left:189px;top:120px;font-size:12px;font-weight:bold;color:#000;">Fields</span>
<span class="t" style="left:412px;top:120px;font-size:12px;font-weight:bold;color:#000;">Displays</span>
<span class="t" style="left:551px;top:262px;font-size:12px;font-weight:bold;color:#000;">Use Default</span>
<span class="t" style="left:418px;top:286px;font-size:12px;font-weight:bold;color:#999999;letter-spacing:0.1px;">1998-06-29 21:29:59Z</span>
<span class="t" style="left:418px;top:304px;font-size:12px;font-weight:bold;color:#999999;letter-spacing:0.1px;">1998-06-29 21:35:57Z</span>
<span class="t" style="left:418px;top:322px;font-size:12px;font-weight:bold;color:#999999;letter-spacing:0.1px;">1998-06-29 21:41:50Z</span>
<span class="t" style="left:418px;top:340px;font-size:12px;font-weight:bold;color:#999999;letter-spacing:0.1px;">1998-06-29 21:47:48Z</span>
<span class="t" style="left:418px;top:358px;font-size:12px;font-weight:bold;color:#999999;letter-spacing:0.1px;">1998-06-29 21:53:43Z</span>
<span class="t" style="left:418px;top:376px;font-size:12px;font-weight:bold;color:#999999;letter-spacing:0.1px;">1998-06-29 21:59:36Z</span>
<span class="t" style="left:367px;top:414px;font-size:12px;font-weight:bold;color:#000;">Create Display</span>
<span class="t" style="left:12px;top:447px;font-size:12px;font-weight:bold;color:#000;">Memory: 90/148/1041 MB</span>
</div>
</body></html>
